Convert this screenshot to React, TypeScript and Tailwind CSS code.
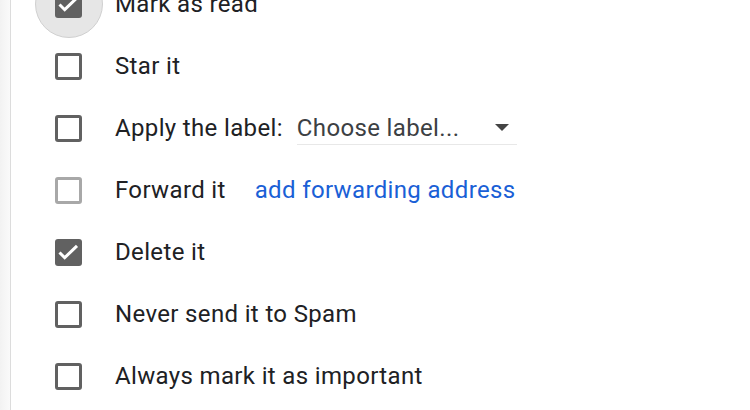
import React from "react";

function Box({ checked, disabled }: { checked?: boolean; disabled?: boolean }) {
  if (checked) {
    return (
      <div className="w-[27px] h-[27px] rounded-[3px] bg-[#616161] flex items-center justify-center">
        <svg width="27" height="27" viewBox="0 0 27 27">
          <path d="M4.5 13.5l5.2 5.2L22 6.8" fill="none" stroke="#fff" strokeWidth="3" />
        </svg>
      </div>
    );
  }
  return (
    <div
      className={
        "w-[27px] h-[27px] rounded-[3px] border-[3px] " +
        (disabled ? "border-[#a8a8a8]" : "border-[#616161]")
      }
    />
  );
}

function Row({ children, checked, disabled }: { children: React.ReactNode; checked?: boolean; disabled?: boolean }) {
  return (
    <div className="h-[62px] flex items-center">
      <div className="w-[115px] pl-[55px] flex items-center">
        <Box checked={checked} disabled={disabled} />
      </div>
      <div className="flex items-center">{children}</div>
    </div>
  );
}

export default function App() {
  return (
    <div
      className="w-[750px] h-[410px] overflow-hidden bg-white flex text-[#202124] text-[24px] tracking-[0.35px]"
      style={{ fontFamily: "Roboto, 'Noto Sans', sans-serif" }}
    >
      <div className="w-[10px] h-full bg-gradient-to-r from-[#f2f2f2] to-[#fafafa]" />
      <div className="w-[1px] h-full bg-[#dcdcdc]" />
      <div className="flex-1 flex flex-col -mt-[27px] -ml-[11px]">
        <div className="h-[62px] flex items-center relative">
          <div className="absolute left-[35px] top-[-3px] w-[68px] h-[68px] rounded-full bg-[#e6e6e6] border border-[#d0d0d0]" />
          <div className="w-[115px] pl-[55px] flex items-center relative">
            <Box checked />
          </div>
          <div className="relative">Mark as read</div>
        </div>
        <Row>Star it</Row>
        <Row>
          <span>Apply the label:</span>
          <div className="ml-[14px] w-[220px] h-[34px] border-b border-[#e8e8e8] flex items-center justify-between pr-[8px] text-[#3c4043]">
            <span>Choose label...</span>
            <svg width="14" height="7" viewBox="0 0 14 7">
              <path d="M0 0h14L7 7z" fill="#444" />
            </svg>
          </div>
        </Row>
        <Row disabled>
          <span>Forward it</span>
          <span className="ml-[29px] text-[#1a5fd6]">add forwarding address</span>
        </Row>
        <Row checked>Delete it</Row>
        <Row>Never send it to Spam</Row>
        <Row>Always mark it as important</Row>
      </div>
    </div>
  );
}
